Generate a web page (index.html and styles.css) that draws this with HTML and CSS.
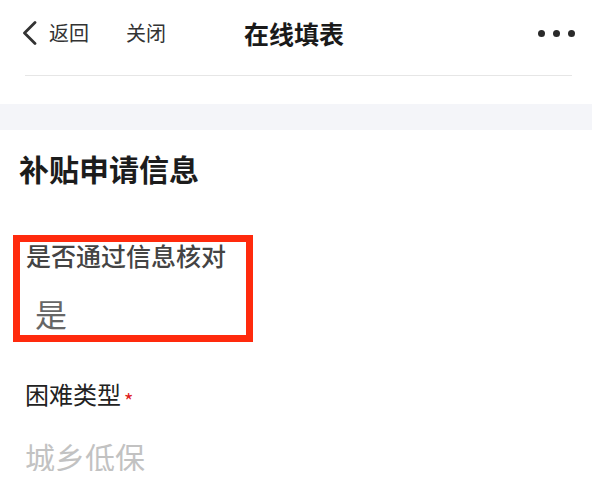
FILE: index.html
```html
<!DOCTYPE html>
<html lang="zh-CN">
<head>
  <meta charset="UTF-8">
  <meta name="viewport" content="width=device-width, initial-scale=1.0">
  <title>在线填表</title>
  <link rel="stylesheet" href="styles.css">
</head>
<body>

  <!-- Top Bar -->
  <header class="navbar">
    <div class="nav-left">
      <span class="nav-back">
        <svg class="chevron" width="15" height="24" viewBox="0 0 15 24">
          <path d="M13 1.5 L2.5 12 L13 22.5" fill="none" stroke="#333" stroke-width="2.8" stroke-linecap="round" stroke-linejoin="round"/>
        </svg>
        <span>返回</span>
      </span>
      <span class="nav-close">关闭</span>
    </div>
    <h1 class="nav-title">在线填表</h1>
    <div class="nav-right">
      <span class="dot"></span><span class="dot"></span><span class="dot"></span>
    </div>
  </header>
  <div class="divider"></div>

  <div class="band"></div>

  <!-- Form -->
  <section class="form">
    <h2 class="form-title">补贴申请信息</h2>

    <div class="field field-marked">
      <div class="field-label">是否通过信息核对</div>
      <div class="field-value">是</div>
    </div>

    <div class="field field-plain">
      <div class="field-label field-dark">困难类型<span class="required">*</span></div>
      <div class="field-value field-placeholder">城乡低保</div>
    </div>
  </section>

</body>
</html>
```

FILE: styles.css
```css
body { margin: 0; background: #fff; color: #222; font-family: "Noto Sans CJK SC", "Noto Sans", sans-serif; }

.navbar { display: grid; grid-template-columns: 1fr auto 1fr; align-items: center; height: 66px; padding: 0 17px 0 22px; }
.nav-left { display: flex; align-items: center; font-size: 20px; line-height: 20px; color: #333; }
.nav-back { display: flex; align-items: center; gap: 12px; }
.chevron { display: block; }
.nav-close { margin-left: 37px; }
.nav-title { margin: 0 9px 0 0; font-size: 25px; line-height: 25px; font-weight: 700; color: #1a1a1a; }
.nav-right { display: flex; justify-content: flex-end; gap: 8px; }
.dot { width: 7px; height: 7px; border-radius: 50%; background: #2a2a2a; }

.divider { height: 1px; background: #e6e6e6; margin: 9px 20px 0 25px; }
.band { height: 26px; margin-top: 28px; background: #f4f5f9; }

.form { padding: 0 0 0 19px; }
.form-title { margin: 23px 0 0; font-size: 30px; line-height: 30px; font-weight: 600; color: #1c1c1c; }

.field-marked { box-sizing: border-box; width: 240px; margin: 52px 0 0 -6px; border: 7px solid #ff2a0d; padding: 1px 0 6px 6px; }
.field-plain { margin: 40px 0 0 6px; }
.field-label { font-size: 25px; line-height: 25px; font-weight: 500; color: #444; }
.field-dark { font-size: 24px; line-height: 24px; color: #222; font-weight: 400; }
.field-value { font-size: 30px; line-height: 30px; color: #666; }
.field-marked .field-value { margin: 29px 0 0 9px; font-size: 32px; line-height: 32px; }
.field-plain .field-value { margin-top: 28px; }
.field-placeholder { color: #c2c2c2; }
.required { color: #e02020; font-size: 20px; margin-left: 3px; vertical-align: -5px; }
```
